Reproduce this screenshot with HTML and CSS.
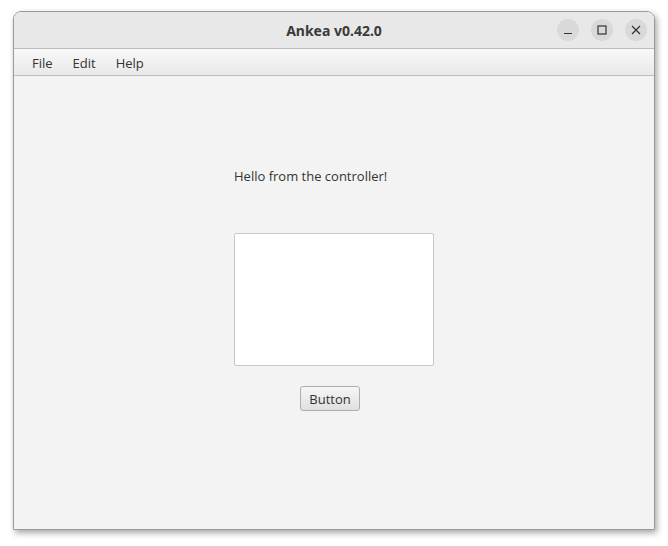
FILE: index.html
```html
<!DOCTYPE html>
<html lang="en">
<head>
  <meta charset="UTF-8">
  <title>Ankea v0.42.0</title>
  <link rel="stylesheet" href="styles.css">
</head>
<body>

<div class="window">
  <div class="titlebar">
    <span class="title">Ankea v0.42.0</span>
    <div class="controls">
      <span class="ctl">
        <svg width="10" height="10" viewBox="0 0 10 10"><path d="M1 8.5h8" stroke="#333" stroke-width="1.2"/></svg>
      </span>
      <span class="ctl">
        <svg width="10" height="10" viewBox="0 0 10 10"><rect x="1" y="1" width="8" height="8" fill="none" stroke="#333" stroke-width="1.2"/></svg>
      </span>
      <span class="ctl">
        <svg width="10" height="10" viewBox="0 0 10 10"><path d="M1 1l8 8M9 1l-8 8" stroke="#333" stroke-width="1.2"/></svg>
      </span>
    </div>
  </div>

  <div class="menubar">
    <span class="menu">File</span>
    <span class="menu">Edit</span>
    <span class="menu">Help</span>
  </div>

  <div class="content">
    <div class="column">
      <p class="label">Hello from the controller!</p>
      <div class="textarea"></div>
      <button class="button">Button</button>
    </div>
  </div>
</div>

</body>
</html>
```

FILE: styles.css
```css
* {
  box-sizing: border-box;
}

body {
  margin: 0;
  padding: 11px 13px;
  background-color: #fff;
  font-family: 'Open Sans', 'Noto Sans', sans-serif;
  font-size: 13px;
  color: #333;
}

.window {
  width: 642px;
  height: 519px;
  display: flex;
  flex-direction: column;
  border: 1px solid #999;
  border-radius: 8px 8px 0 0;
  box-shadow: 2px 3px 6px rgba(0, 0, 0, 0.35);
  overflow: hidden;
}

.titlebar {
  height: 37px;
  flex: none;
  position: relative;
  display: flex;
  align-items: center;
  justify-content: center;
  background-color: #e8e8e8;
  border-bottom: 1px solid #bdbdbd;
}

.title {
  font-family: 'Noto Sans', 'Open Sans', sans-serif;
  font-weight: bold;
  font-size: 14px;
  color: #3a3a3a;
}

.controls {
  position: absolute;
  right: 7px;
  top: 7px;
  display: flex;
  gap: 12px;
}

.ctl {
  width: 22px;
  height: 22px;
  border-radius: 50%;
  background-color: #d9d9d9;
  display: flex;
  align-items: center;
  justify-content: center;
}

.menubar {
  height: 27px;
  flex: none;
  display: flex;
  align-items: center;
  padding: 2px 0 0 18px;
  gap: 20px;
  background: linear-gradient(#f8f8f8, #e9e9e9);
  border-bottom: 1px solid #bdbdbd;
}

.menu {
  color: #333;
}

.content {
  flex: 1;
  background-color: #f3f3f3;
  display: flex;
  justify-content: center;
}

.column {
  width: 200px;
  padding-top: 91px;
  display: flex;
  flex-direction: column;
}

.label {
  margin: 0;
  line-height: 18px;
}

.textarea {
  margin-top: 48px;
  height: 133px;
  background-color: #fff;
  border: 1px solid #c8c8c8;
  border-radius: 2px;
}

.button {
  align-self: flex-start;
  margin-top: 20px;
  margin-left: 66px;
  width: 60px;
  height: 25px;
  padding: 0;
  font-family: inherit;
  font-size: 13px;
  color: #333;
  background: linear-gradient(#f6f6f6, #e0e0e0);
  border: 1px solid #adadad;
  border-radius: 3px;
}
```
